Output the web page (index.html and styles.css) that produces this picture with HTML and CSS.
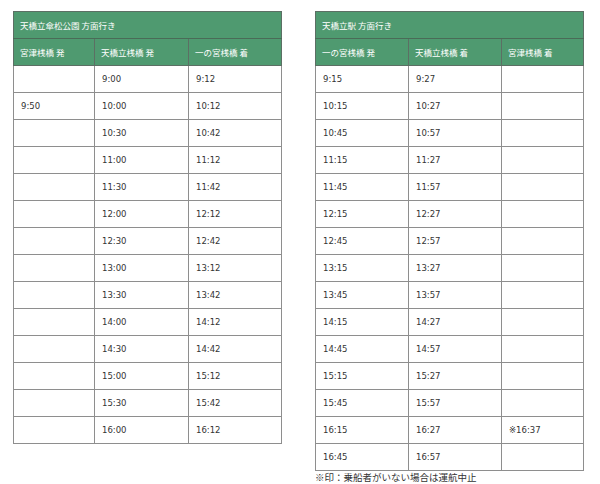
FILE: index.html
```html
<!DOCTYPE html>
<html lang="ja">
<head>
<meta charset="utf-8">
<link rel="stylesheet" href="styles.css">
</head>
<body>
<div class="page">
  <div class="block">
    <table class="tt">
      <colgroup><col class="c81"><col class="c94"><col class="c93"></colgroup>
      <thead>
        <tr><th colspan="3" class="title">天橋立傘松公園 方面行き</th></tr>
        <tr><th>宮津桟橋 発</th><th>天橋立桟橋 発</th><th>一の宮桟橋 着</th></tr>
      </thead>
      <tbody>
        <tr><td></td><td>9:00</td><td>9:12</td></tr>
        <tr><td>9:50</td><td>10:00</td><td>10:12</td></tr>
        <tr><td></td><td>10:30</td><td>10:42</td></tr>
        <tr><td></td><td>11:00</td><td>11:12</td></tr>
        <tr><td></td><td>11:30</td><td>11:42</td></tr>
        <tr><td></td><td>12:00</td><td>12:12</td></tr>
        <tr><td></td><td>12:30</td><td>12:42</td></tr>
        <tr><td></td><td>13:00</td><td>13:12</td></tr>
        <tr><td></td><td>13:30</td><td>13:42</td></tr>
        <tr><td></td><td>14:00</td><td>14:12</td></tr>
        <tr><td></td><td>14:30</td><td>14:42</td></tr>
        <tr><td></td><td>15:00</td><td>15:12</td></tr>
        <tr><td></td><td>15:30</td><td>15:42</td></tr>
        <tr><td></td><td>16:00</td><td>16:12</td></tr>
      </tbody>
    </table>
  </div>
  <div class="block">
    <table class="tt">
      <colgroup><col class="c93"><col class="c93"><col class="c82"></colgroup>
      <thead>
        <tr><th colspan="3" class="title">天橋立駅 方面行き</th></tr>
        <tr><th>一の宮桟橋 発</th><th>天橋立桟橋 着</th><th>宮津桟橋 着</th></tr>
      </thead>
      <tbody>
        <tr><td>9:15</td><td>9:27</td><td></td></tr>
        <tr><td>10:15</td><td>10:27</td><td></td></tr>
        <tr><td>10:45</td><td>10:57</td><td></td></tr>
        <tr><td>11:15</td><td>11:27</td><td></td></tr>
        <tr><td>11:45</td><td>11:57</td><td></td></tr>
        <tr><td>12:15</td><td>12:27</td><td></td></tr>
        <tr><td>12:45</td><td>12:57</td><td></td></tr>
        <tr><td>13:15</td><td>13:27</td><td></td></tr>
        <tr><td>13:45</td><td>13:57</td><td></td></tr>
        <tr><td>14:15</td><td>14:27</td><td></td></tr>
        <tr><td>14:45</td><td>14:57</td><td></td></tr>
        <tr><td>15:15</td><td>15:27</td><td></td></tr>
        <tr><td>15:45</td><td>15:57</td><td></td></tr>
        <tr><td>16:15</td><td>16:27</td><td>※16:37</td></tr>
        <tr><td>16:45</td><td>16:57</td><td></td></tr>
      </tbody>
    </table>
    <p class="note">※印：乗船者がいない場合は運航中止</p>
  </div>
</div>
</body>
</html>
```
FILE: styles.css
```css
html, body {
  margin: 0;
  padding: 0;
  background: #fff;
}
.page {
  display: flex;
  align-items: flex-start;
  gap: 34px;
  padding: 11px 0 0 13px;
  font-family: "DejaVu Sans", "Noto Sans CJK JP", sans-serif;
  color: #333;
}
.block {
  width: 268px;
}
.tt {
  width: 268px;
  border-collapse: collapse;
  table-layout: fixed;
  border: 1px solid #8e8e8e;
}
.c81 { width: 81px; }
.c82 { width: 82px; }
.c93 { width: 93px; }
.c94 { width: 94px; }
.tt th {
  background: #4f9a70;
  color: #fff;
  font-family: "Noto Sans CJK JP", sans-serif;
  font-weight: normal;
  font-size: 8.5px;
  text-align: left;
  height: 27px;
  padding: 0 6px;
  border: 1px solid #5c6f64;
  box-sizing: border-box;
}
.tt th.title {
  border-bottom: 1px solid #4a6b57;
}
.tt td {
  height: 27px;
  padding: 0 7px;
  font-size: 8.5px;
  border: 1px solid #8e8e8e;
  box-sizing: border-box;
  color: #333;
}
.note {
  margin: 1px 0 0 0;
  font-family: "Noto Sans CJK JP", sans-serif;
  font-size: 9.5px;
  line-height: 11px;
  color: #333;
}
```
